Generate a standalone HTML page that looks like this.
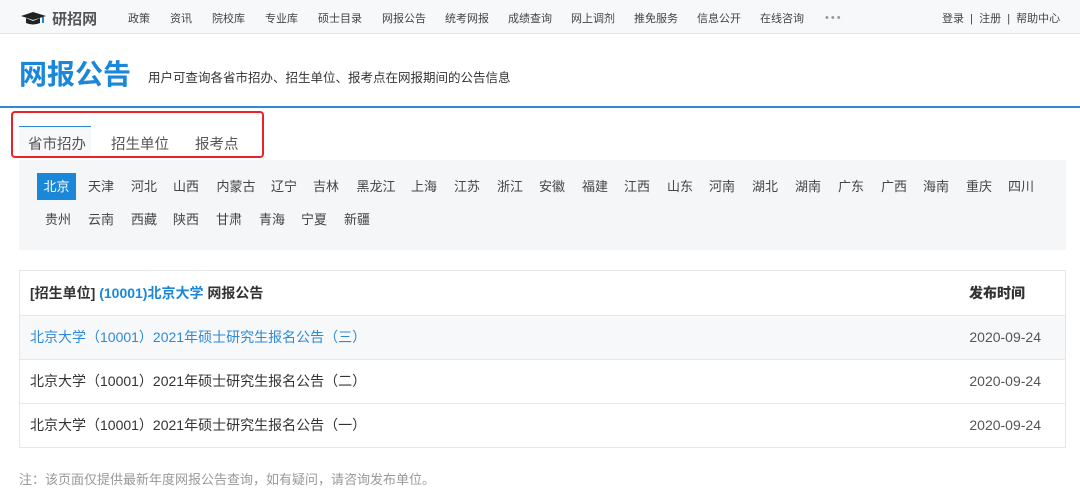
<!DOCTYPE html>
<html><head><meta charset="utf-8"><style>
*{margin:0;padding:0;box-sizing:border-box}
body{width:1080px;height:497px;overflow:hidden;background:#fff;font-family:"Liberation Sans","Noto Sans CJK SC",sans-serif;color:#333;position:relative}
.top{position:absolute;left:0;top:0;width:1080px;height:34px;background:#f7f8fa;border-bottom:1px solid #e2e2e2}
.logo{position:absolute;left:20px;top:8px;font-size:15px;font-weight:bold;color:#555}
.nav{position:absolute;top:10px;font-size:11px;color:#444}
.title{position:absolute;left:19px;top:53px;font-size:28px;font-weight:bold;color:#1a87d9}
.sub{position:absolute;left:148px;top:67px;font-size:12.5px;color:#333}
.bl{position:absolute;left:0;top:106px;width:1080px;height:2px;background:#2e8ad8}
.red{position:absolute;left:11px;top:111px;width:253px;height:47px;border:2px solid #e8242a;border-radius:4px}
.tab{position:absolute;top:133px;font-size:14.5px;color:#555}
.panel{position:absolute;left:19px;top:160px;width:1047px;height:90px;background:#f5f6f8}
.p{position:absolute;font-size:13px;color:#444;height:27px;line-height:27px;text-align:center}
.tbl{position:absolute;left:19px;top:270px;width:1047px;height:178px;border:1px solid #e6e6e6}
.r{position:absolute;left:0;width:1045px;border-bottom:1px solid #e8e8e8;font-size:14px}
.r span{position:absolute;left:10px}
.r b{position:absolute;right:24px}
.note{position:absolute;left:19px;top:469px;font-size:13px;color:#999}
</style></head><body>
<div class="top">
<div class="logo"><svg width="28" height="14" viewBox="0 0 28 14" style="vertical-align:-1px"><path d="M1 5 L13 1 L26 5 L13 9 Z" fill="#222"/><path d="M6 7 L6 12 Q13 15 20 12 L20 7 L13 10 Z" fill="#222"/><path d="M23 6 L23 12" stroke="#1a87d9" stroke-width="2"/></svg> 研招网</div>
<div class="nav" style="left:128px">政策</div>
<div class="nav" style="left:170px">资讯</div>
<div class="nav" style="left:212px">院校库</div>
<div class="nav" style="left:265px">专业库</div>
<div class="nav" style="left:318px">硕士目录</div>
<div class="nav" style="left:382px">网报公告</div>
<div class="nav" style="left:445px">统考网报</div>
<div class="nav" style="left:508px">成绩查询</div>
<div class="nav" style="left:571px">网上调剂</div>
<div class="nav" style="left:634px">推免服务</div>
<div class="nav" style="left:697px">信息公开</div>
<div class="nav" style="left:760px">在线咨询</div>
<div class="nav" style="left:825px;top:12px;color:#999;letter-spacing:2px">•••</div>
<div class="nav" style="left:942px">登录 &nbsp;|&nbsp; 注册 &nbsp;|&nbsp; 帮助中心</div>
</div>
<div class="title">网报公告</div>
<div class="sub">用户可查询各省市招办、招生单位、报考点在网报期间的公告信息</div>
<div class="bl"></div>
<div style="position:absolute;left:19px;top:126px;width:72px;height:31px;background:#f7f8fa;border-top:1px solid #2e8ad8"></div>
<div class="red"></div>
<div class="tab" style="left:28px">省市招办</div>
<div class="tab" style="left:111px">招生单位</div>
<div class="tab" style="left:195px">报考点</div>
<div class="panel"></div>
<div class="p" style="left:37px;top:173px;width:39px;background:#1a87d9;color:#fff">北京</div>
<div class="p" style="left:80px;top:173px;width:42px">天津</div>
<div class="p" style="left:123px;top:173px;width:42px">河北</div>
<div class="p" style="left:165px;top:173px;width:42px">山西</div>
<div class="p" style="left:208px;top:173px;width:56px">内蒙古</div>
<div class="p" style="left:263px;top:173px;width:42px">辽宁</div>
<div class="p" style="left:305px;top:173px;width:42px">吉林</div>
<div class="p" style="left:348px;top:173px;width:56px">黑龙江</div>
<div class="p" style="left:403px;top:173px;width:42px">上海</div>
<div class="p" style="left:446px;top:173px;width:42px">江苏</div>
<div class="p" style="left:489px;top:173px;width:42px">浙江</div>
<div class="p" style="left:531px;top:173px;width:42px">安徽</div>
<div class="p" style="left:574px;top:173px;width:42px">福建</div>
<div class="p" style="left:616px;top:173px;width:42px">江西</div>
<div class="p" style="left:659px;top:173px;width:42px">山东</div>
<div class="p" style="left:701px;top:173px;width:42px">河南</div>
<div class="p" style="left:744px;top:173px;width:42px">湖北</div>
<div class="p" style="left:787px;top:173px;width:42px">湖南</div>
<div class="p" style="left:830px;top:173px;width:42px">广东</div>
<div class="p" style="left:873px;top:173px;width:42px">广西</div>
<div class="p" style="left:915px;top:173px;width:42px">海南</div>
<div class="p" style="left:958px;top:173px;width:42px">重庆</div>
<div class="p" style="left:1000px;top:173px;width:42px">四川</div>
<div class="p" style="left:37px;top:206px;width:42px">贵州</div>
<div class="p" style="left:80px;top:206px;width:42px">云南</div>
<div class="p" style="left:123px;top:206px;width:42px">西藏</div>
<div class="p" style="left:165px;top:206px;width:42px">陕西</div>
<div class="p" style="left:208px;top:206px;width:42px">甘肃</div>
<div class="p" style="left:251px;top:206px;width:42px">青海</div>
<div class="p" style="left:293px;top:206px;width:42px">宁夏</div>
<div class="p" style="left:336px;top:206px;width:42px">新疆</div>
<div class="tbl">
<div class="r" style="top:0;height:45px;line-height:44px;font-weight:bold;color:#333"><span>[招生单位] <font color="#1a87d9">(10001)北京大学</font> 网报公告</span><b style="right:40px">发布时间</b></div>
<div class="r" style="top:45px;height:44px;line-height:43px;background:#f7f8fa;color:#2e8ad8"><span>北京大学（10001）2021年硕士研究生报名公告（三）</span><b style="font-weight:normal;color:#555">2020-09-24</b></div>
<div class="r" style="top:89px;height:44px;line-height:43px"><span>北京大学（10001）2021年硕士研究生报名公告（二）</span><b style="font-weight:normal;color:#555">2020-09-24</b></div>
<div class="r" style="top:133px;height:43px;line-height:43px;border-bottom:none"><span>北京大学（10001）2021年硕士研究生报名公告（一）</span><b style="font-weight:normal;color:#555">2020-09-24</b></div>
</div>
<div class="note">注：该页面仅提供最新年度网报公告查询，如有疑问，请咨询发布单位。</div>
</body></html>
